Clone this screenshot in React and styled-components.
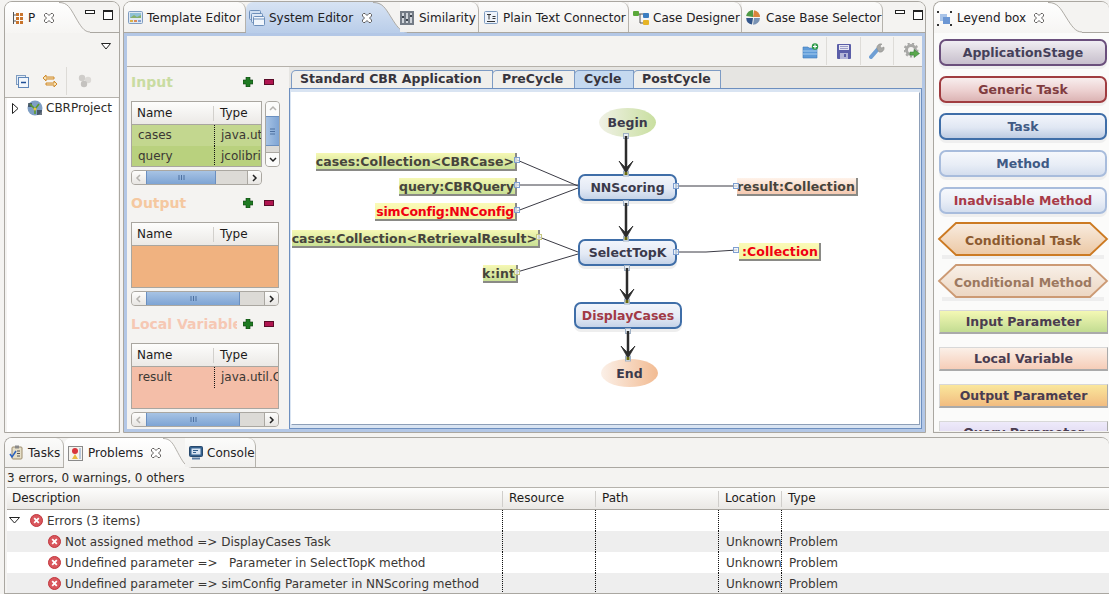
import React from "react";
import styled, { createGlobalStyle } from "styled-components";

const Global = createGlobalStyle`
  html, body { margin: 0; padding: 0; background: #f4f3f1; }
  body { font-family: "DejaVu Sans", sans-serif; font-size: 12px; color: #2e2b28; }
  * { box-sizing: border-box; }
`;

const Page = styled.div`
  width: 1109px; height: 594px; overflow: hidden; display: flex; flex-direction: column;
  background: #f4f3f1; padding: 1px 0 0 4px;
`;
const TopRow = styled.div`display: flex; height: 432px;`;
const Folder = styled.section`
  display: flex; flex-direction: column; width: ${p => p.$w}px; margin-left: ${p => p.$ml || 0}px;
  border: 1px solid #aaa7a1;
  border-right: ${p => p.$open ? "none" : "1px solid #aaa7a1"};
  border-radius: 8px 8px 0 0; background: #f4f3f1; overflow: hidden; flex: ${p => p.$grow ? 1 : "none"};
`;
const TabBar = styled.div`
  display: flex; align-items: stretch; height: ${p => p.$h ?? 31}px; flex: none; border-bottom: 1px solid #aaa7a1;
  background: #f4f3f1; position: relative;
`;
const Tab = styled.div`
  display: flex; align-items: center; gap: ${p => p.$gap ?? 5}px; padding: ${p => p.$pt ?? 1}px 0 0 ${p => p.$pl ?? 4}px;
  width: ${p => p.$w}px; flex: none; white-space: nowrap;
  border-right: 1px solid #b5b2ac;
  border-radius: 0 8px 0 0; font-size: 12px; color: #23211f;
  background: linear-gradient(#fbfbfa, #f1f0ee);
  position: relative; margin-left: ${p => p.$ml || 0}px; z-index: 2;
`;
const ActiveTab = styled.div`
  display: flex; align-items: center; gap: ${p => p.$gap ?? 5}px; flex: none; white-space: nowrap;
  padding: ${p => p.$pt ?? 1}px 0 0 ${p => p.$pl ?? 4}px; width: ${p => p.$w}px; border-radius: 7px 0 0 0;
  background: ${p => p.$blue ? "linear-gradient(#d7e3f3, #b9cde9)" : "linear-gradient(#fff, #f6f5f3)"};
  margin-bottom: -1px; z-index: 1; position: relative; color: #23211f;
`;
const CurveSvg = styled.svg`flex: none; height: calc(100% + 1px); margin-bottom: -1px; z-index: 1; display: block;`;
const Curve = ({ from, to, id, w }) => (
  <CurveSvg width={w} viewBox="0 0 36 31" preserveAspectRatio="none">
    <defs><linearGradient id={id} x1="0" x2="0" y1="0" y2="1"><stop offset="0" stopColor={from} /><stop offset="1" stopColor={to} /></linearGradient></defs>
    <path d="M0 0 C10 0 13 6 19 15 C25 24 29 30 36 30 L36 31 L0 31Z" fill={`url(#${id})`} />
    <path d="M0 0.5 C10 0.5 13 6 19 15 C25 24 29 30 36 30" fill="none" stroke="#aaa7a1" />
  </CurveSvg>
);
const Spacer = styled.div`flex: 1;`;
const WinButtons = styled.div`
  position: absolute; top: 8px; right: ${p => p.$right}px; z-index: 3; display: flex; gap: 8px; align-items: flex-start;
`;
const Minimize = styled.i`display: block; width: 10px; height: 4px; border: 1px solid #222; background: #fff;`;
const Maximize = styled.i`display: block; width: 10px; height: 10px; border: 1px solid #222; border-top-width: 2px; background: #fff;`;
const CloseSlot = styled.span`display: block; flex: none; margin-left: ${p => p.$ml || 0}px;`;

const CloseX = ({ ml }) => (
  <CloseSlot $ml={ml}>
    <svg width="10" height="10" viewBox="0 0 10 10" style={{ display: "block" }}>
      <path d="M0.5 1.5 L1.5 .5 L3 .5 L5 2.5 L7 .5 L8.5 .5 L9.5 1.5 L9.5 3 L7.5 5 L9.5 7 L9.5 8.5 L8.5 9.5 L7 9.5 L5 7.5 L3 9.5 L1.5 9.5 L.5 8.5 L.5 7 L2.5 5 L.5 3Z" fill="#fff" stroke="#3c3a38" strokeWidth=".8" />
    </svg>
  </CloseSlot>
);

/* ---------- small drawings ---------- */
const I = ({ w = 16, h = 16, children, vb }) => <svg width={w} height={h} viewBox={vb || `0 0 ${w} ${h}`} style={{ flex: "none", display: "block" }}>{children}</svg>;
const PkgIcon = () => <I w={11} h={13}><path d="M1.5 0V12" stroke="#555" /><path d="M1 3H4M1 9H4" stroke="#555" /><path d="M4 1h3v3H4zM8 1h3v3H8zM4 5h3v3H4zM8 5h3v3H8zM4 9h3v3H4zM8 9h3v3H8z" fill="#c8742c" /></I>;
const TemplateIcon = () => <I w={15} h={13}><rect x=".5" y=".5" width="14" height="12" rx="1" fill="#dfe9f4" stroke="#7f9cc0" /><rect x="2" y="2" width="11" height="5" fill="#8fc1d6" /><path d="M2 7l4-3 3 2 4-2v3z" fill="#86b06c" /><rect x="2" y="9" width="3" height="2" fill="#d9b24a" /><rect x="6" y="9" width="3" height="2" fill="#d98a5a" /><rect x="10" y="9" width="3" height="2" fill="#84a0d0" /></I>;
const SystemIcon = () => <I w={16} h={16}><rect x=".5" y=".5" width="11" height="9" rx="1" fill="#cfdff2" stroke="#6d8fba" /><rect x="2.5" y="3.5" width="11" height="9" rx="1" fill="#dfe9f6" stroke="#6d8fba" /><rect x="4.5" y="6.5" width="11" height="9" rx="1" fill="#f1f6fc" stroke="#6d8fba" /><path d="M5 9h10" stroke="#6d8fba" /></I>;
const SimilarityIcon = () => <I w={14} h={14}><rect width="14" height="14" fill="#747c86" /><path d="M2 2h2v10H2zM6 2h2v10H6zM10 2h2v10h-2z" fill="#cfd4da" /><path d="M2 5h2v2H2zM6 8h2v2H6zM10 4h2v2h-2z" fill="#3e4650" /></I>;
const TextIcon = () => <I w={14} h={13}><rect x=".5" y=".5" width="13" height="12" rx="1" fill="#eef3fa" stroke="#7f9cc0" /><path d="M3 3.5h4M5 3.5v5M8.5 5.5h3M8.5 7.5h3M3 10.5h8" stroke="#333" /></I>;
const DesignerIcon = () => <I w={16} h={16}><path d="M5 4h6M7 4v9h4" stroke="#555" fill="none" /><rect x="0" y="1" width="6" height="5" rx="1" fill="#5aa83a" /><rect x="10" y="3" width="6" height="5" rx="1" fill="#3b7dc0" /><rect x="10" y="10" width="6" height="5" rx="1" fill="#e6b426" /></I>;
const PieIcon = () => <I w={15} h={15}><path d="M7 7L14 7A7 7 0 0 0 8 .2Z" fill="#d9843c" /><path d="M7 7L7 0A7 7 0 0 0 .1 6Z" fill="#4f9a45" /><path d="M7 8L.2 8A7 7 0 0 0 6 14.6Z" fill="#33568c" /><path d="M8 8L14 8A7 7 0 0 1 7 14.7Z" fill="#7a93b4" /></I>;
const LegendIcon = () => <I w={15} h={15}><rect x="3" y="3" width="7" height="7" fill="#a9c4e8" /><rect x="6" y="6" width="7" height="7" fill="#6c97d4" /><path d="M0 0h2v2H0zM13 0h2v2h-2zM0 13h2v2H0zM13 13h2v2h-2z" fill="#333" /></I>;
const TasksIcon = () => <I w={15} h={15}><rect x="3" y="2" width="10" height="12" rx="1" fill="#e6dfc8" stroke="#9c8c6c" /><rect x="6" y=".5" width="4" height="3" fill="#8a8a8a" /><path d="M8 6h3M8 8.5h3M8 11h3" stroke="#555" /><path d="M1 9l2 3 4-6" stroke="#2a62c0" strokeWidth="1.5" fill="none" /></I>;
const ProblemsIcon = () => <I w={15} h={15}><rect x=".5" y=".5" width="14" height="14" fill="#f6f3ee" stroke="#8a8a8a" /><circle cx="7" cy="5" r="3" fill="#d8343c" /><path d="M7 8l3 5H4z" fill="#e8b840" /><path d="M11 2h2v11h-2z" fill="#b8c8dc" /></I>;
const ConsoleIcon = () => <I w={14} h={14}><rect x=".5" y=".5" width="13" height="10" rx="1" fill="#34618e" stroke="#27486c" /><rect x="2.5" y="2.5" width="9" height="6" fill="#d7e4f2" /><path d="M4 4.5h5M4 6.5h3" stroke="#34618e" /><path d="M3 12.5h8" stroke="#5b7ea4" strokeWidth="2" /></I>;
const ErrorIcon = () => <I w={13} h={13}><circle cx="6.5" cy="6.5" r="6" fill="#d9565c" stroke="#c0353c" /><path d="M4.2 4.2l4.6 4.6M8.8 4.2l-4.6 4.6" stroke="#fff" strokeWidth="1.8" /></I>;
const TriDown = ({ w = 9 }) => <I w={w} h={7}><path d={`M.5.5h${w - 1}L${w / 2} 6z`} fill="#fff" stroke="#222" /></I>;
const TriRight = () => <I w={7} h={11}><path d="M.5.5l5.5 5-5.5 5z" fill="#fff" stroke="#222" /></I>;
const GlobeIcon = () => <I w={16} h={16}><circle cx="8" cy="8" r="7.5" fill="#7f9fc4" /><path d="M1 3h4v4H1zM10 10h5v5h-5z" fill="#2e3a48" opacity=".7" /><path d="M3 4l5 5 4-5M8 9v5" stroke="#5a9a2c" strokeWidth="1.6" fill="none" /><circle cx="8" cy="9" r="1.5" fill="#e8c840" /></I>;
const CollapseIcon = () => <I w={13} h={13}><rect x=".5" y=".5" width="9" height="9" fill="#e4edf7" stroke="#7f9cc0" /><rect x="2.5" y="2.5" width="10" height="10" fill="#f2f6fb" stroke="#5f86b8" /><path d="M5 7.5h5" stroke="#1f4f96" strokeWidth="1.5" /></I>;
const LinkIcon = () => <I w={16} h={16}><path d="M4 2L1 5l3 3V6h8V4H4zM12 8l3 3-3 3v-2H4v-2h8z" fill="#f7e3b8" stroke="#cf8a2c" /></I>;
const DotsIcon = () => <I w={14} h={14}><circle cx="4" cy="4" r="3.2" fill="#cfcdca" /><circle cx="10" cy="6" r="3.2" fill="#dcdad7" /><circle cx="6" cy="10" r="3.2" fill="#c4c2bf" /></I>;
const PlusIcon = () => <I w={10} h={10}><path d="M3 0h4v3h3v4H7v3H3V7H0V3h3z" fill="#1e7a22" stroke="#0e3d12" strokeWidth=".6" /></I>;
const MinusIcon = () => <I w={10} h={6}><rect x=".5" y=".5" width="9" height="5" fill="#b01550" stroke="#5a0c28" /></I>;
const FolderPlus = () => <I w={17} h={16}><path d="M1 4h5l1 1h8v10H1z" fill="#5f9bd8" stroke="#3d78b8" strokeWidth=".6" /><path d="M1 8h14M1 11h14" stroke="#a8cdef" /><circle cx="13" cy="3.5" r="3.2" fill="#2e9a48" /><path d="M11 3.5h4M13 1.5v4" stroke="#fff" strokeWidth="1.2" /></I>;
const FloppyIcon = () => <I w={14} h={15}><rect width="14" height="15" rx="1" fill="#5b5ea8" /><rect x="2" y="1" width="10" height="5" fill="#e6e6f2" /><path d="M3 2.5h8M3 4.5h8" stroke="#9a9cc8" /><rect x="3" y="9" width="8" height="6" fill="#b4b6d8" /><rect x="7" y="10" width="2" height="3" fill="#5b5ea8" /></I>;
const WrenchIcon = () => <I w={16} h={16}><path d="M2 14l7-8" stroke="#6f9fd4" strokeWidth="4" strokeLinecap="round" /><path d="M8 6a4 4 0 0 1 5-5l-2 2 1.5 2 2.5-1a4 4 0 0 1-5 5z" fill="#a9a9a6" stroke="#8a8a88" strokeWidth=".5" /></I>;
const GearIcon = () => <I w={16} h={16}><circle cx="7" cy="7" r="4.5" fill="none" stroke="#a8a8a6" strokeWidth="3" /><circle cx="7" cy="7" r="6.5" fill="none" stroke="#a8a8a6" strokeWidth="2" strokeDasharray="2.2 2.2" /><path d="M6 9h4V6.5l5.5 4-5.500 4V12H6z" fill="#5aa84c" stroke="#2e7a34" strokeWidth=".5" /></I>;

/* ---------- left view ---------- */
const ViewMenu = styled.div`height: 32px; display: flex; justify-content: flex-end; padding: 10px 8px 0 0; flex: none;`;
const TreeBar = styled.div`
  height: 33px; flex: none; display: flex; align-items: center; padding-left: 11px; border-bottom: 1px solid #b5b2ac;
`;
const LinkSlot = styled.div`margin-left: 13px; flex: none;`;
const ToolSep = styled.div`width: 1px; height: 28px; background: #dddbd7; margin: 0 11px 0 8px; flex: none;`;
const TreeArea = styled.div`flex: 1; margin: 0 1px 0 2px; background: #fff; padding: 2px 0 0 5px;`;
const TreeRow = styled.div`display: flex; align-items: center; height: 16px; font-size: 12px;`;
const TreeGlobe = styled.div`margin: 0 3px 0 8px; flex: none;`;

/* ---------- centre ---------- */
const EditorFrame = styled.div`
  flex: 1; display: flex; flex-direction: column; border: 3px solid #b3c7e6; min-height: 0;
`;
const EditorTools = styled.div`
  height: 31px; flex: none; border-bottom: 1px solid #b5b1aa; display: flex; justify-content: flex-end; align-items: center;
`;
const ToolSlot = styled.div`
  width: ${p => p.$w ?? 33}px; height: 28px; display: flex; align-items: center;
  justify-content: ${p => p.$last ? "flex-end" : "center"}; padding-right: ${p => p.$last ? 2 : 0}px;
  border-right: ${p => p.$last ? "none" : "1px solid #dedcd8"};
`;
const EditorBody = styled.div`flex: 1; display: flex; min-height: 0;`;
const SideColumn = styled.div`width: 162px; flex: none; padding: 6px 0 0 4px;`;
const SectionHead = styled.div`display: flex; align-items: center; height: 18px; width: 148px; margin-bottom: 10px;`;
const SectionTitle = styled.div`
  width: 106px; overflow: hidden; white-space: nowrap; font-weight: bold; font-size: 14px; color: ${p => p.$color};
`;
const IconSlot = styled.div`width: 21px; display: flex; justify-content: center; align-items: center;`;
const SectionRow = styled.div`display: flex; gap: 3px;`;
const GridBox = styled.div`
  width: ${p => p.$w}px; height: 66px; border: 1px solid #a9a6a0; background: ${p => p.$fill || "#fff"}; flex: none; overflow: hidden;
`;
const GridHead = styled.div`
  height: 23px; display: flex; align-items: center; border-bottom: 1px solid #a9a6a0; background: linear-gradient(#fdfdfc, #ebe9e6);
  font-size: 12px; color: #1d1b1a;
`;
const HeadCell = styled.div`
  width: ${p => p.$w}px; flex: none; padding-left: ${p => p.$pl ?? 5}px; height: 15px; line-height: 15px; white-space: nowrap; overflow: hidden;
  border-right: ${p => p.$sep ? "1px solid #d2d0cc" : "none"};
`;
const GridRow = styled.div`
  height: 21px; display: flex; align-items: center; background: ${p => p.$bg || "transparent"}; font-size: 12px; color: #3b3834;
`;
const BodyCell = styled.div`
  width: ${p => p.$w}px; flex: none; padding-left: 6px; height: 100%; line-height: 20px; white-space: nowrap; overflow: hidden;
  border-right: ${p => p.$sep ? "1px dotted #111" : "none"};
`;
const HBar = styled.div`
  margin-top: 3px; width: ${p => p.$w}px; height: 15px; display: flex; border: 1px solid #aaa7a1; border-radius: 4px; background: #dcdad6; overflow: hidden;
`;
const ScrollEnd = styled.div`
  width: 14px; flex: none; background: linear-gradient(#fdfdfc, #e8e6e3); display: flex; align-items: center; justify-content: center;
  ${p => p.$side === "r" ? "border-left: 1px solid #aaa7a1;" : ""}
`;
const HThumb = styled.div`
  width: ${p => p.$w}px; flex: none; background: linear-gradient(#a7c3e4, #7ea4d4); border: 1px solid #6a8fc0; display: flex; align-items: center; justify-content: center; margin: -1px 0;
`;
const VBar = styled.div`
  width: 15px; height: 66px; flex: none; display: flex; flex-direction: column; border: 1px solid #aaa7a1; border-radius: 4px; background: #dcdad6; overflow: hidden;
`;
const VEnd = styled.div`height: 14px; flex: none; display: flex; align-items: center; justify-content: center; background: #fbfbfa; ${p => p.$bottom ? "margin-top:auto;border-top:1px solid #aaa7a1;" : ""}`;
const VThumb = styled.div`height: 30px; flex: none; background: linear-gradient(90deg, #a7c3e4, #7ea4d4); border: 1px solid #6a8fc0; margin: 0 -1px; display: flex; align-items: center; justify-content: center;`;
const Grip = ({ v }) => v
  ? <I w={7} h={7}><path d="M1 1h5M1 3.500h5M1 6h5" stroke="#4d70a0" /></I>
  : <I w={7} h={7}><path d="M1 1v5M3.500 1v5M6 1v5" stroke="#4d70a0" /></I>;
const Chev = ({ dir, dim }) => {
  const d = { l: "M5 1L2 4l3 3", r: "M2 1l3 3-3 3", u: "M1 5l3-3 3 3", d: "M1 2l3 3 3-3" }[dir];
  return <I w={8} h={8}><path d={d} fill="none" stroke={dim ? "#b5b3af" : "#222"} strokeWidth="1.5" /></I>;
};
const SectionGap = styled.div`height: ${p => p.$h}px;`;

const Section = ({ title, color, fill, rows = [], vbar, width, thumb }) => (
  <>
    <SectionHead>
      <SectionTitle $color={color}>{title}</SectionTitle>
      <IconSlot><PlusIcon /></IconSlot><IconSlot><MinusIcon /></IconSlot>
    </SectionHead>
    <SectionRow>
      <GridBox $fill={fill} $w={width}>
        <GridHead><HeadCell $w={82} $sep>Name</HeadCell><HeadCell $w={60} $pl={6}>Type</HeadCell></GridHead>
        {rows.map(r => (
          <GridRow key={r[0]} $bg={r[2]}><BodyCell $w={83} $sep>{r[0]}</BodyCell><BodyCell $w={width - 85}>{r[1]}</BodyCell></GridRow>
        ))}
      </GridBox>
      {vbar && (
        <VBar><VEnd><Chev dir="u" dim /></VEnd><VThumb><Grip v /></VThumb><VEnd $bottom><Chev dir="d" /></VEnd></VBar>
      )}
    </SectionRow>
    <HBar $w={width}>
      <ScrollEnd><Chev dir="l" dim /></ScrollEnd><HThumb $w={thumb}><Grip /></HThumb><Spacer /><ScrollEnd $side="r"><Chev dir="r" /></ScrollEnd>
    </HBar>
  </>
);

const TabPane = styled.div`flex: 1; display: flex; flex-direction: column; min-width: 0; background: #e6e5e2;`;
const SubTabs = styled.div`height: 21px; flex: none; display: flex; align-items: flex-end; padding-left: 2px;`;
const SubTab = styled.div`
  width: ${p => p.$w}px; height: 18px; flex: none; border: 1px solid #7d9bc4; border-bottom: none; border-radius: 5px 0 0 0; margin-right: -1px;
  background: ${p => p.$on ? "#c5d9f0" : "#f0efec"};
  font-weight: bold; font-size: 12.500px; padding-left: ${p => p.$pl ?? 8}px; line-height: 16px; color: #37343c; white-space: nowrap;
`;
const CanvasFrame = styled.div`
  flex: 1; border: 1px solid #6d8fbf; padding: 3px 1px; background: #d9e4f2; display: flex; min-height: 0;
`;
const Canvas = styled.div`flex: 1; position: relative; background: #fff; border: 1px solid #8d9fb8; border-left-color: #fff; border-top-color: #fff;`;
const Wires = styled.svg`position: absolute; left: 0; top: 0; overflow: visible; pointer-events: none;`;

const CX = 292, CY = 93;
const place = p => `left: ${p.$x - CX}px; top: ${p.$y - CY}px; width: ${p.$w}px; height: ${p.$h}px;`;
const NodeText = `font-weight: bold; font-size: 12.500px; white-space: nowrap;`;
const TaskNode = styled.div`
  position: absolute; ${place}
  border: 2px solid #3f6ea8; border-radius: 7px; background: linear-gradient(#f2f5fb 0%, #e4eaf5 55%, #c5d3e8 100%);
  box-shadow: 0 3px 0 #eeeeee; display: flex; align-items: center; justify-content: center;
  ${NodeText} color: ${p => p.$color || "#3b3a4c"};
`;
const EllipseNode = styled.div`
  position: absolute; ${place} border-radius: 50%; background: linear-gradient(90deg, ${p => p.$from}, ${p => p.$to});
  display: flex; align-items: center; justify-content: center; ${NodeText} color: #3b3a4c;
`;
const ParamNode = styled.div`
  position: absolute; ${place}
  background: ${p => p.$bg}; border-right: 2px solid #8a8a86; border-bottom: 2px solid #8a8a86;
  display: flex; align-items: center; justify-content: flex-end; padding-right: 1px;
  ${NodeText} letter-spacing: ${p => p.$ls ?? 0.1}px; color: ${p => p.$color || "#46443c"};
`;
const GREEN = "linear-gradient(#f6f8b4, #c9e094)";
const PEACH = "linear-gradient(#fff3ea, #f5c9b0)";
const YEL = "linear-gradient(#fafab8, #f4f4a0)";

const Arrow = ({ x, y1, y2 }) => (
  <g>
    <rect x={x - 2.500} y={y1 - 2.500} width="5" height="5" fill="#e8eef4" stroke="#9fb0c4" />
    <rect x={x - 2.500} y={y2 - 2} width="5" height="5" fill="#e8eef4" stroke="#9fb0c4" />
    <path d={`M${x} ${y1}V${y2 - 3}`} stroke="#2c2c2c" strokeWidth="2.500" />
    <path d={`M${x - 7} ${y2 - 12}L${x} ${y2}L${x + 7} ${y2 - 12}L${x} ${y2 - 5}Z`} fill="#2c2c2c" stroke="#2c2c2c" strokeWidth=".8" />
    <rect x={x - 1.500} y={y2 - 1} width="3" height="3" fill="#6a6a10" />
  </g>
);
const Port = ({ x, y, c = "#7f9fd0" }) => <rect x={x - 2.500} y={y - 2.500} width="5" height="5" fill="#eef3fa" fillOpacity=".7" stroke={c} />;

const Diagram = () => (
  <Canvas>
    <EllipseNode $x={599} $y={108} $w={57} $h={29} $from="#f0f1e6" $to="#c9dfa0">Begin</EllipseNode>
    <TaskNode $x={578} $y={174} $w={99} $h={27}>NNScoring</TaskNode>
    <TaskNode $x={578} $y={239} $w={99} $h={27}>SelectTopK</TaskNode>
    <TaskNode $x={574} $y={302} $w={108} $h={27} $color="#a13a46">DisplayCases</TaskNode>
    <EllipseNode $x={601} $y={359} $w={57} $h={28} $from="#fbf0e8" $to="#f2bb92">End</EllipseNode>
    <ParamNode $x={316} $y={153} $w={201} $h={18} $bg={GREEN} $ls={0.05}>{"cases:Collection<CBRCase>"}</ParamNode>
    <ParamNode $x={399} $y={178} $w={118} $h={18} $bg={GREEN} $ls={-0.1}>query:CBRQuery</ParamNode>
    <ParamNode $x={375} $y={203} $w={142} $h={18} $bg={YEL} $ls={-0.2} $color="#f00010">simConfig:NNConfig</ParamNode>
    <ParamNode $x={292} $y={230} $w={248} $h={18} $bg={GREEN} $ls={0.05}>{"cases:Collection<RetrievalResult>"}</ParamNode>
    <ParamNode $x={483} $y={265} $w={35} $h={18} $bg={GREEN}>k:int</ParamNode>
    <ParamNode $x={737} $y={178} $w={121} $h={18} $bg={PEACH}>result:Collection</ParamNode>
    <ParamNode $x={739} $y={243} $w={82} $h={18} $bg={YEL} $color="#f00010">:Collection</ParamNode>
    <Wires width="630" height="336" viewBox={`${CX} ${CY} 630 336`}>
      <path d="M517 160L578 186M517 185H578M517 211L578 188M539 237L578 252M517 272L578 254M676 186H737M676 252L706 252L737 250" stroke="#3a3a44" fill="none" />
      <Arrow x={626} y1={136} y2={173} />
      <Arrow x={626} y1={203} y2={238} />
      <Arrow x={627} y1={268} y2={301} />
      <Arrow x={628} y1={331} y2={358} />
      <Port x={517} y={160} /><Port x={517} y={185} /><Port x={517} y={210} /><Port x={539} y={237} c="#c8c880" /><Port x={517} y={272} c="#c8c880" />
      <Port x={676} y={186} /><Port x={736} y={186} /><Port x={676} y={252} /><Port x={736} y={250} />
    </Wires>
  </Canvas>
);

/* ---------- legend ---------- */
const LegendList = styled.div`flex: 1; overflow: hidden; padding: 6px 0 0 5px; margin-bottom: 1px; background: #fbfbfa; display: flex; flex-direction: column; min-height: 0;`;
const LegendBtn = styled.div`
  width: 168px; height: 27px; flex: none; margin-bottom: 10px; border: 2px solid ${p => p.$bd}; border-radius: 7px;
  background: ${p => p.$bg}; box-shadow: 0 3px 0 #efefef;
  display: flex; align-items: center; justify-content: center;
  font-weight: bold; font-size: 12.500px; color: ${p => p.$color};
`;
const HexWrap = styled.div`
  width: 170px; height: 34px; flex: none; margin: ${p => p.$mt}px 0 ${p => p.$mb}px -1px; padding-top: 2px; position: relative; display: flex; align-items: center; justify-content: center;
  font-weight: bold; font-size: 12.500px; color: ${p => p.$color};
`;
const HexSvg = styled.svg`position: absolute; inset: 0; overflow: visible;`;
const HexLabel = styled.span`position: relative;`;
const Hex = ({ label, stroke, color, id, a, b, mt, mb }) => (
  <HexWrap $color={color} $mt={mt} $mb={mb}>
    <HexSvg width="170" height="34" viewBox="0 0 170 34">
      <defs><linearGradient id={id} x1="0" x2="0" y1="0" y2="1"><stop offset="0" stopColor={a} /><stop offset="1" stopColor={b} /></linearGradient></defs>
      <rect x="4" y="33" width="162" height="4" fill="#eeeeee" />
      <path d="M1 17L18 1H152L169 17L152 33H18Z" fill={`url(#${id})`} stroke={stroke} strokeWidth="1.8" />
    </HexSvg>
    <HexLabel>{label}</HexLabel>
  </HexWrap>
);
const ParamBtn = styled.div`
  width: 169px; height: 24px; flex: none; margin-bottom: 13px; background: ${p => p.$bg}; border-bottom: 2px solid #aaa; border-right: 1px solid #aaa; border-top: 1px solid #d8d8d8; border-left: 1px solid #d8d8d8;
  display: flex; align-items: center; justify-content: center;
  font-weight: bold; font-size: 12.500px; color: #4a3c50;
`;

/* ---------- problems ---------- */
const Bottom = styled.div`margin-top: 4px; flex: 1; display: flex; min-height: 0;`;
const StatusLine = styled.div`height: 19px; flex: none; padding: 3px 0 0 2px; font-size: 12px; line-height: 15px; color: #2b2926;`;
const ProblemTable = styled.div`flex: 1; margin-left: 2px; background: #fff; display: flex; flex-direction: column; min-height: 0; overflow: hidden;`;
const ProblemHead = styled.div`
  height: 23px; flex: none; display: flex; align-items: center; padding-top: 1px; background: linear-gradient(#fdfdfc, #eae8e5);
  border-top: 1px solid #b5b2ac; border-bottom: 1px solid #a9a6a0; font-size: 12px; color: #1d1b1a;
`;
const ProblemHeadCell = styled.div`
  width: ${p => p.$w}px; flex: ${p => p.$w ? "none" : 1}; padding-left: ${p => p.$pl ?? 6}px; height: 16px; line-height: 15px; border-right: ${p => p.$w ? "1px solid #d0cecb" : "none"}; white-space: nowrap; overflow: hidden;
`;
const ProblemRow = styled.div`
  height: 21px; flex: none; display: flex; background: ${p => p.$alt ? "#eeeeee" : "#fff"}; font-size: 12px; color: #3a3734;
`;
const ProblemCell = styled.div`
  width: ${p => p.$w}px; flex: ${p => p.$w ? "none" : 1}; display: flex; align-items: center; gap: 4px; padding-left: ${p => p.$pl ?? 7}px; height: 100%; white-space: pre; overflow: hidden;
  border-right: ${p => p.$w ? "1px dotted #111" : "none"};
`;
const LeadSlot = styled.span`display: block; flex: none; margin-right: 6px;`;
const COLS = [496, 93, 123, 63];
const Row = ({ alt, text, loc, type, pl, lead }) => (
  <ProblemRow $alt={alt}>
    <ProblemCell $w={COLS[0]} $pl={pl}>{lead && <LeadSlot>{lead}</LeadSlot>}<ErrorIcon />{text}</ProblemCell>
    <ProblemCell $w={COLS[1]} /><ProblemCell $w={COLS[2]} />
    <ProblemCell $w={COLS[3]}>{loc}</ProblemCell><ProblemCell>{type}</ProblemCell>
  </ProblemRow>
);

export default function App() {
  return (
    <Page>
      <Global />
      <TopRow>
        <Folder $w={116}>
          <TabBar>
            <ActiveTab $w={54} $pl={7} $gap={5}><PkgIcon /><span>P</span><CloseX ml={4} /></ActiveTab>
            <Curve id="c1" w={31} from="#ffffff" to="#f6f5f3" />
            <WinButtons $right={6}><Minimize /><Maximize /></WinButtons>
          </TabBar>
          <ViewMenu><TriDown w={10} /></ViewMenu>
          <TreeBar><CollapseIcon /><LinkSlot><LinkIcon /></LinkSlot><ToolSep /><DotsIcon /></TreeBar>
          <TreeArea><TreeRow><TriRight /><TreeGlobe><GlobeIcon /></TreeGlobe>CBRProject</TreeRow></TreeArea>
        </Folder>

        <Folder $w={803} $ml={3}>
          <TabBar>
            <Tab $w={122} $gap={4}><TemplateIcon />Template Editor</Tab>
            <ActiveTab $blue $w={127} $pl={3} $gap={4}><SystemIcon />System Editor<CloseX ml={5} /></ActiveTab>
            <Curve id="c2" w={34} from="#d7e3f3" to="#b9cde9" />
            <Tab $w={79} $ml={-7} $pl={0} $gap={5}><SimilarityIcon />Similarity</Tab>
            <Tab $w={150} $pl={5} $gap={5}><TextIcon />Plain Text Connector</Tab>
            <Tab $w={113} $pl={4} $gap={4}><DesignerIcon />Case Designer</Tab>
            <Tab $w={141} $pl={4} $gap={5}><PieIcon />Case Base Selector</Tab>
            <WinButtons $right={2}><Minimize /><Maximize /></WinButtons>
          </TabBar>
          <EditorFrame>
            <EditorTools>
              <ToolSlot $w={33}><FolderPlus /></ToolSlot>
              <ToolSlot $w={34}><FloppyIcon /></ToolSlot>
              <ToolSlot $w={33}><WrenchIcon /></ToolSlot>
              <ToolSlot $w={28} $last><GearIcon /></ToolSlot>
            </EditorTools>
            <EditorBody>
              <SideColumn>
                <Section title="Input" color="#c9dca2" vbar width={131} thumb={70}
                  rows={[["cases", "java.util", "#c3d78f"], ["query", "jcolibri", "#b9d17e"]]} />
                <SectionGap $h={9} />
                <Section title="Output" color="#f5c8a0" fill="#f0b280" width={148} thumb={94} />
                <SectionGap $h={9} />
                <Section title="Local Variable" color="#f6c8b4" fill="#f4bea8" width={148} thumb={94}
                  rows={[["result", "java.util.Collection"]]} />
              </SideColumn>
              <TabPane>
                <SubTabs>
                  <SubTab $w={202}>Standard CBR Application</SubTab>
                  <SubTab $w={83} $pl={9}>PreCycle</SubTab>
                  <SubTab $w={60} $on $pl={9}>Cycle</SubTab>
                  <SubTab $w={88}>PostCycle</SubTab>
                </SubTabs>
                <CanvasFrame><Diagram /></CanvasFrame>
              </TabPane>
            </EditorBody>
          </EditorFrame>
        </Folder>

        <Folder $grow $ml={7} $open>
          <TabBar>
            <ActiveTab $w={114} $pl={3} $gap={5}><LegendIcon />Leyend box<CloseX ml={3} /></ActiveTab>
            <Curve id="c3" w={34} from="#ffffff" to="#f6f5f3" />
          </TabBar>
          <LegendList>
            <LegendBtn $bd="#6a4f7c" $color="#45405a" $bg="linear-gradient(#f0eef3, #d9d3dc 55%, #c7bfcd)">ApplicationStage</LegendBtn>
            <LegendBtn $bd="#a03c40" $color="#803c40" $bg="linear-gradient(#f8eeee, #ecd0d0 55%, #dcb4b4)">Generic Task</LegendBtn>
            <LegendBtn $bd="#3f6ea8" $color="#3f5a84" $bg="linear-gradient(#f2f5fb, #e0e7f3 55%, #bccbe2)">Task</LegendBtn>
            <LegendBtn $bd="#a8bcdc" $color="#3f5a84" $bg="linear-gradient(#f6f8fc, #e8edf6 55%, #d4deee)">Method</LegendBtn>
            <LegendBtn $bd="#a8bcdc" $color="#a83a48" $bg="linear-gradient(#f6f8fc, #e8edf6 55%, #d4deee)">Inadvisable Method</LegendBtn>
            <Hex id="h1" label="Conditional Task" stroke="#cc7a22" color="#8c5a30" a="#f8ece0" b="#ecc8a4" mt={-2} mb={8} />
            <Hex id="h2" label="Conditional Method" stroke="#cc9a74" color="#9c7860" a="#f8f0e8" b="#ecd6c2" mt={0} mb={12} />
            <ParamBtn $bg="linear-gradient(#f4f8b4, #c2dc92)">Input Parameter</ParamBtn>
            <ParamBtn $bg="linear-gradient(#fbf0e8, #f6cdb8)">Local Variable</ParamBtn>
            <ParamBtn $bg="linear-gradient(#fae79c, #f2bc80)">Output Parameter</ParamBtn>
            <ParamBtn $bg="linear-gradient(#eeeafa, #d8d0ec)">Query Parameter</ParamBtn>
          </LegendList>
        </Folder>
      </TopRow>

      <Bottom>
        <Folder $grow $open>
          <TabBar $h={30}>
            <Tab $w={59} $pl={4} $gap={4} $pt={0}><TasksIcon />Tasks</Tab>
            <ActiveTab $w={99} $pl={4} $gap={5} $pt={0}><ProblemsIcon />Problems<CloseX ml={3} /></ActiveTab>
            <Curve id="c4" w={28} from="#ffffff" to="#f6f5f3" />
            <Tab $w={71} $ml={-6} $pl={4} $gap={4} $pt={0}><ConsoleIcon />Console</Tab>
          </TabBar>
          <StatusLine>3 errors, 0 warnings, 0 others</StatusLine>
          <ProblemTable>
            <ProblemHead>
              <ProblemHeadCell $w={COLS[0]} $pl={5}>Description</ProblemHeadCell>
              <ProblemHeadCell $w={COLS[1]}>Resource</ProblemHeadCell>
              <ProblemHeadCell $w={COLS[2]}>Path</ProblemHeadCell>
              <ProblemHeadCell $w={COLS[3]}>Location</ProblemHeadCell>
              <ProblemHeadCell>Type</ProblemHeadCell>
            </ProblemHead>
            <Row lead={<TriDown w={11} />} pl={2} text="Errors (3 items)" />
            <Row alt pl={41} text="Not assigned method => DisplayCases Task" loc="Unknown" type="Problem" />
            <Row pl={41} text="Undefined parameter =>   Parameter in SelectTopK method" loc="Unknown" type="Problem" />
            <Row alt pl={41} text="Undefined parameter => simConfig Parameter in NNScoring method" loc="Unknown" type="Problem" />
          </ProblemTable>
        </Folder>
      </Bottom>
    </Page>
  );
}
